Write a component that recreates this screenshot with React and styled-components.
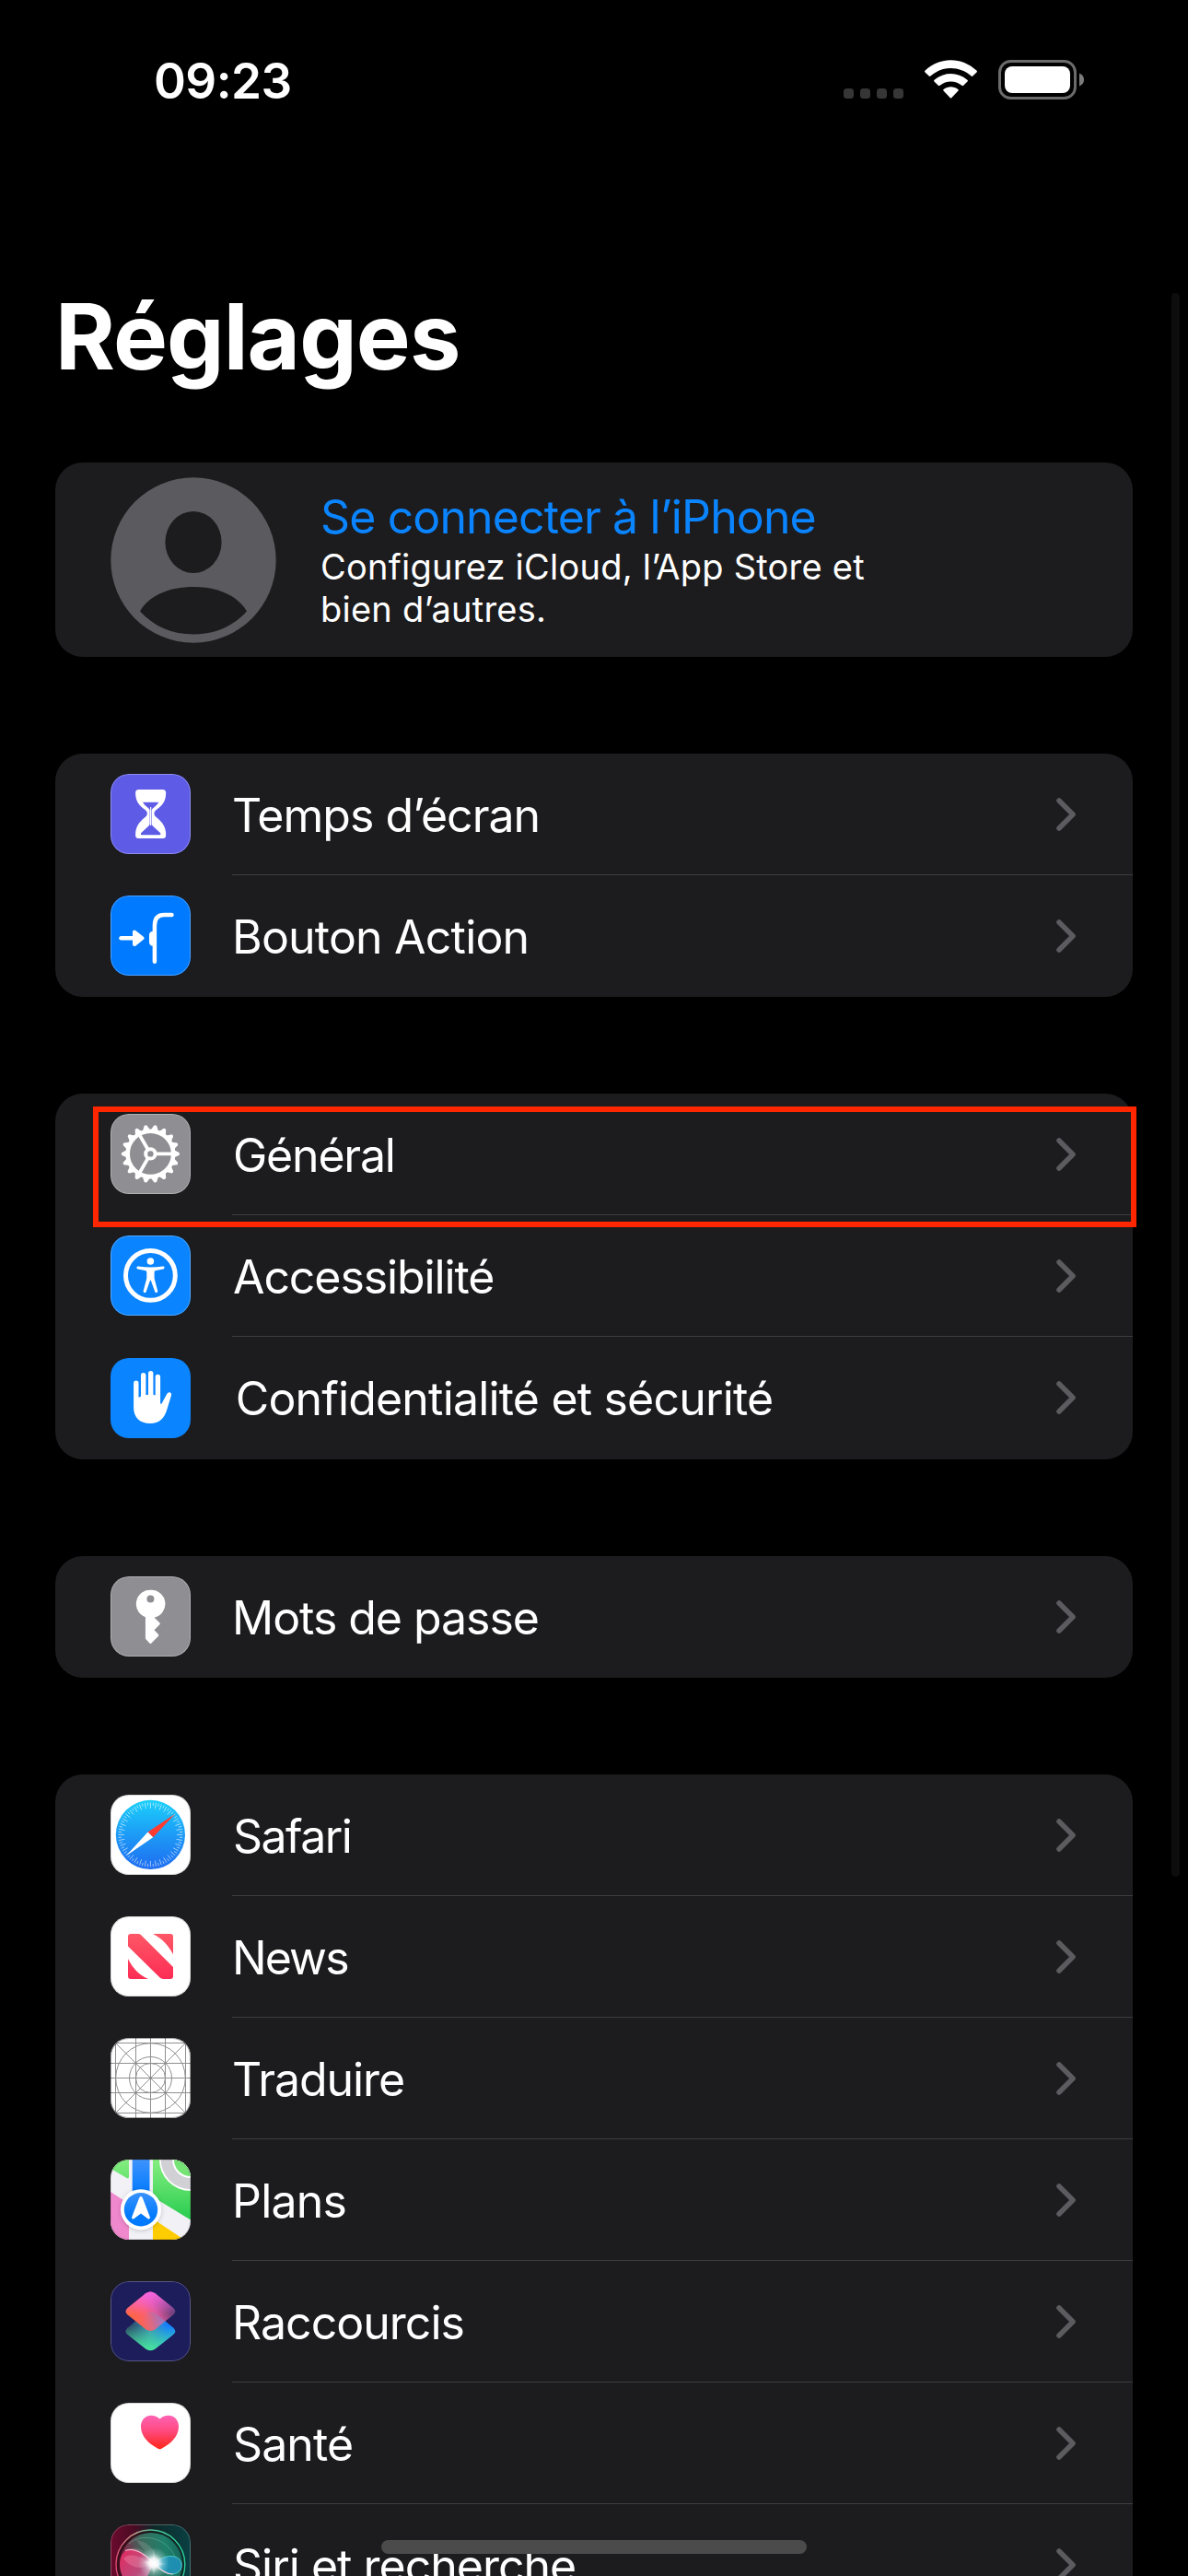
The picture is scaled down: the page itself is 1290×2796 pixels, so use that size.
import React from "react";
import styled, { createGlobalStyle } from "styled-components";

const GlobalStyle = createGlobalStyle`
  html, body {
    margin: 0;
    background: #000;
  }
  * {
    box-sizing: border-box;
  }
`;

const Screen = styled.div`
  position: relative;
  display: flex;
  flex-direction: column;
  width: 1290px;
  height: 2796px;
  overflow: hidden;
  background: #000;
  color: #fff;
  font-family: Inter, "Liberation Sans", sans-serif;
`;

const StatusBar = styled.header`
  display: flex;
  flex: none;
  align-items: center;
  justify-content: space-between;
  height: 118px;
  padding: 58px 113px 0 167px;
`;

const Clock = styled.time`
  font-size: 53px;
  font-weight: 600;
  line-height: 60px;
  letter-spacing: -0.6px;
`;

const StatusIcons = styled.div`
  display: flex;
  align-items: flex-start;
  height: 46px;
`;

const SignalDots = styled.div`
  display: flex;
  gap: 7px;
  margin: 31px 23px 0 0;
`;

const Dot = styled.i`
  width: 11px;
  height: 11px;
  border-radius: 3.5px;
  background: #363636;
`;

const WifiIcon = styled.svg`
  width: 57px;
  height: 43px;
  margin-right: 23px;
`;

const BatteryIcon = styled.svg`
  width: 93px;
  height: 43px;
`;

const Title = styled.h1`
  flex: none;
  margin: 187px 0 77px 60px;
  font-size: 99px;
  font-weight: 700;
  line-height: 120px;
  letter-spacing: -0.89px;
`;

const Groups = styled.main`
  display: flex;
  flex-direction: column;
  gap: 105px;
  padding: 0 60px;
`;

const Card = styled.section`
  flex: none;
  padding-bottom: ${(p) => p.$padBottom ?? 0}px;
  border-radius: 30px;
  background: #1c1c1e;
  overflow: hidden;
`;

const AccountCard = styled(Card)`
  display: flex;
  align-items: flex-start;
  height: 211px;
  padding-left: 60px;
`;

const Avatar = styled.svg`
  flex: none;
  width: 180px;
  height: 180px;
  margin: 15.5px 48px 0 0;
`;

const AccountText = styled.div`
  padding-top: 32px;
`;

const AccountName = styled.div`
  margin-bottom: 4px;
  color: #0a84ff;
  font-size: 50px;
  line-height: 54px;
  letter-spacing: -0.88px;
`;

const AccountHint = styled.div`
  width: 640px;
  font-size: 38px;
  line-height: 46px;
  letter-spacing: 0.24px;
`;

const Row = styled.div`
  display: flex;
  height: 132px;
  padding-left: 60px;
`;

const IconTile = styled.svg`
  flex: none;
  width: 87px;
  height: 87px;
  margin: ${(p) => p.$top}px 45px 0 0;
  border-radius: 20px;
`;

const RowBody = styled.div`
  display: flex;
  flex: 1;
  align-items: center;
  justify-content: space-between;
  padding: 0 62px 0 0;
  border-bottom: ${(p) => (p.$divided ? "1px solid #3d3d41" : "0")};
`;

const RowLabel = styled.span`
  padding: ${(p) => (p.$divided ? 3 : 2)}px 0 0 ${(p) => p.$indent}px;
  font-size: 50px;
  line-height: 60px;
  letter-spacing: ${(p) => p.$tracking}px;
  white-space: nowrap;
`;

const Chevron = styled.svg`
  flex: none;
  width: 21px;
  height: 36px;
`;

const Highlight = styled.div`
  position: absolute;
  top: 1201px;
  left: 101px;
  width: 1133px;
  height: 131px;
  border: 6px solid #ff2600;
`;

const ScrollThumb = styled.div`
  position: absolute;
  top: 318px;
  right: 9px;
  width: 9px;
  height: 1719px;
  border-radius: 5px;
  background: #0d0d0d;
`;

const HomeIndicator = styled.div`
  position: absolute;
  top: 2757px;
  left: 414px;
  width: 462px;
  height: 15px;
  border-radius: 8px;
  background: #4b4b4b;
`;

const Edge = ({ opacity = 0.3, color = "#fff" }) => (
  <rect x="0.5" y="0.5" width="86" height="86" rx="19.5" fill="none" stroke={color} strokeOpacity={opacity} />
);

const polar = (r, deg, c = 43.4) => {
  const a = (deg * Math.PI) / 180;
  return [c + r * Math.cos(a), c + r * Math.sin(a)];
};

const HourglassArt = () => (
  <>
    <rect width="87" height="87" fill="#5e5ce6" />
    <path
      fill="#fff"
      fillRule="evenodd"
      d="M30.5 17H56.8C59 17 60.2 18.3 60.2 20.4C60.2 30 56 34 50.3 38.6C48 40.5 47.5 41.4 47.5 43C47.5 44.8 48 45.7 50.3 47.6C56 52.4 60.2 57 60.2 66.4C60.2 68.7 59 70 56.8 70H30.5C28.3 70 27.1 68.7 27.1 66.4C27.1 57 31.3 52.4 37 47.6C39.3 45.7 39.8 44.8 39.8 43C39.8 41.4 39.3 40.5 37 38.6C31.3 34 27.1 30 27.1 20.4C27.1 18.3 28.3 17 30.5 17ZM35 30.8C36.2 33 38 34.6 40 36.3C41.8 37.8 42.4 38.4 42.6 39.6V54C42.6 55 42.2 55.8 41.4 56.6L33.6 63.8C32.6 64.8 32.5 66.3 34 66.3H53.3C54.8 66.3 54.7 64.8 53.7 63.8L45.9 56.6C45.1 55.8 44.7 55 44.7 54V39.6C44.9 38.4 45.5 37.8 47.3 36.3C49.3 34.6 51.1 33 52.3 30.8Z"
    />
    <path d="M43.65 36V56" stroke="#fff" strokeWidth="1.2" />
    <Edge />
  </>
);

const ActionArt = () => (
  <>
    <rect width="87" height="87" fill="#007aff" />
    <g fill="none" stroke="#fff" strokeWidth="4.5" strokeLinecap="round" strokeLinejoin="round">
      <path d="M11.5 46.3H27" />
      <path d="M47.9 71.7V32.5Q47.9 21 58.5 21H66.5" />
    </g>
    <path d="M26 39.5V53.1L34.5 46.3Z" fill="#fff" stroke="#fff" strokeWidth="4" strokeLinejoin="round" />
    <path d="M48 38.7H46Q42 39 42 43V50.4Q42 54.4 46 54.7H48Z" fill="#fff" />
    <Edge />
  </>
);

const GearArt = () => {
  const teeth = Array.from({ length: 18 }, (_, i) => i * 20);
  return (
    <>
      <rect width="87" height="87" fill="#8e8e93" />
      <g stroke="#fff" fill="#fff">
        <circle cx="43.4" cy="43.4" r="24.7" fill="none" strokeWidth="4.6" />
        <circle cx="43.4" cy="43.4" r="5.2" fill="none" strokeWidth="4" />
        {[0, 120, 240].map((a) => {
          const [x1, y1] = polar(6, a);
          const [x2, y2] = polar(24, a);
          return <path key={a} d={`M${x1} ${y1}L${x2} ${y2}`} strokeWidth="3.8" />;
        })}
        {teeth.map((a) => (
          <path key={a} transform={`rotate(${a} 43.4 43.4)`} stroke="none" d="M69 39.2L73 41.2Q75 41.7 75 43.4Q75 45.1 73 45.6L69 47.6Z" />
        ))}
      </g>
      <Edge />
    </>
  );
};

const AccessibilityArt = () => (
  <>
    <rect width="87" height="87" fill="#0a84ff" />
    <circle cx="43.4" cy="43.4" r="26.9" fill="none" stroke="#fff" strokeWidth="5" />
    <circle cx="43.4" cy="28" r="3.8" fill="#fff" />
    <path
      fill="#fff"
      d="M30.2 33.5Q43.4 35.6 56.8 33.5C58.9 33.2 59.2 36 57.3 36.4L49.4 38C48 38.4 47.6 39 47.6 40.4V46.5L51.2 60C51.7 62.3 49 63 48.2 61L43.9 49Q43.4 48 42.9 49L38.7 61C37.9 63 35.2 62.3 35.7 60L39.3 46.5V40.4C39.3 39 38.9 38.4 37.5 38L29.6 36.4C27.7 36 28.1 33.2 30.2 33.5Z"
    />
    <Edge />
  </>
);

const HandArt = () => (
  <>
    <rect width="87" height="87" fill="#0a84ff" />
    <path
      fill="#fff"
      d="M25.1 27.2a2.7 2.7 0 0 1 5.4 0V42.8L33 41.7V18.7a2.7 2.7 0 0 1 5.4 0V40.2L41 39.8V16.7a2.7 2.7 0 0 1 5.4 0V39.8L48.7 40.4V20.5a2.7 2.7 0 0 1 5.4 0V49.6C55.1 50 55.6 49.5 56.2 48.2L60.8 39.8C61.7 37.8 63.2 36.8 64.8 37.5C66.2 38.1 66.2 39.6 65.8 41.2L61.6 55C58.6 65.5 53 71 43 71C32 71 25.1 64.5 25.1 54Z"
    />
  </>
);

const KeyArt = () => (
  <>
    <rect width="87" height="87" fill="#8e8e93" />
    <path
      fill="#fff"
      fillRule="evenodd"
      d="M43.4 14.7A15.2 15.2 0 0 1 47.6 44.7L53.3 50.2Q54.2 51.2 53.4 52.2L47.5 58.3L52 63Q52.6 64 52 64.8L44.4 72.4Q43.4 73.4 42.4 72.4L38.7 68.6Q37.9 67.8 37.9 66.8V44.2A15.2 15.2 0 0 1 43.4 14.7ZM43.4 20.6A4 4 0 0 0 43.4 28.6A4 4 0 0 0 43.4 20.6Z"
    />
    <Edge />
  </>
);

const SafariArt = () => (
  <>
    <defs>
      <linearGradient id="safari" x1="0" y1="0" x2="0" y2="1">
        <stop offset="0" stopColor="#1bd0fb" />
        <stop offset="0.5" stopColor="#1d9bf6" />
        <stop offset="1" stopColor="#1e6cf1" />
      </linearGradient>
    </defs>
    <rect width="87" height="87" fill="#fff" />
    <circle cx="43.4" cy="43.4" r="37.6" fill="url(#safari)" />
    {Array.from({ length: 72 }, (_, i) => {
      const [x1, y1] = polar(i % 2 ? 31.6 : 28.6, i * 5);
      const [x2, y2] = polar(35, i * 5);
      return <path key={i} d={`M${x1} ${y1}L${x2} ${y2}`} stroke="#fff" strokeOpacity="0.85" strokeWidth="0.7" />;
    })}
    <path d="M70.2 20.8L40.5 40.6L46.2 46.3Z" fill="#ff3b30" />
    <path d="M17 66.2L40.5 40.6L46.2 46.3Z" fill="#fff" />
    <Edge opacity={0.15} color="#000" />
  </>
);

const NewsArt = () => (
  <>
    <defs>
      <linearGradient id="news" gradientUnits="userSpaceOnUse" x1="0" y1="19" x2="0" y2="68">
        <stop offset="0" stopColor="#fd5766" />
        <stop offset="1" stopColor="#fd2d55" />
      </linearGradient>
    </defs>
    <rect width="87" height="87" fill="#fff" />
    <g fill="url(#news)">
      <path d="M22 19H30Q32 19 33.4 20.4L68 55V65Q68 68 65 68H57Q55 68 53.6 66.6L19 32.4V22Q19 19 22 19Z" />
      <path d="M46 19H65Q68 19 68 22V41.3C62.5 31 56 24 46 19Z" />
      <path d="M19 46V65Q19 68 22 68H41C31 63.5 24.5 57 19 46Z" />
    </g>
    <Edge opacity={0.15} color="#000" />
  </>
);

const GridArt = () => (
  <>
    <rect width="87" height="87" fill="#fff" />
    <g fill="none" stroke="#8f8f8f" strokeWidth="1">
      {[5.5, 27.5, 43.5, 59.5, 81.5].map((v) => (
        <path key={v} d={`M${v} 0V87M0 ${v}H87`} />
      ))}
      <path d="M5 5L82 82M82 5L5 82" />
      <circle cx="43.5" cy="43.5" r="37.8" />
      <circle cx="43.5" cy="43.5" r="23" />
      <circle cx="43.5" cy="43.5" r="16" />
    </g>
    <circle cx="43.5" cy="43.5" r="1.7" fill="#8f8f8f" />
    <Edge opacity={0.35} color="#000" />
  </>
);

const MapsArt = () => (
  <>
    <defs>
      <linearGradient id="park" gradientUnits="userSpaceOnUse" x1="0" y1="0" x2="0" y2="60">
        <stop offset="0" stopColor="#86ee80" />
        <stop offset="1" stopColor="#30cf54" />
      </linearGradient>
      <linearGradient id="route" gradientUnits="userSpaceOnUse" x1="0" y1="0" x2="0" y2="34">
        <stop offset="0" stopColor="#3e93fb" />
        <stop offset="1" stopColor="#067cfd" />
      </linearGradient>
      <linearGradient id="puck" x1="0" y1="0" x2="0" y2="1">
        <stop offset="0" stopColor="#3a92fb" />
        <stop offset="0.7" stopColor="#007aff" />
      </linearGradient>
      <filter id="puckShadow" x="-30%" y="-30%" width="160%" height="160%">
        <feDropShadow dx="0" dy="1" stdDeviation="2.5" floodOpacity="0.2" />
      </filter>
    </defs>
    <rect width="87" height="87" fill="#f2f1f6" />
    <path d="M0 0H20V18.5Q20 21.4 17.6 20L0 9.8Z" fill="url(#park)" />
    <path d="M46 0H87V65.5L46 40.5Z" fill="url(#park)" />
    <rect x="23.7" width="18.8" height="40" fill="url(#route)" />
    <path d="M0 35L20 48V87H0Z" fill="#f088cd" />
    <path d="M46 64.3L80 87H46Z" fill="#ffcc02" />
    <circle cx="87" cy="0" r="34" fill="#fff" />
    <circle cx="87" cy="0" r="32.3" fill="#d1d0d5" />
    <circle cx="87" cy="0" r="20" fill="#fff" />
    <circle cx="87" cy="0" r="18" fill="#75e474" />
    <circle cx="33" cy="54.2" r="22" fill="#fff" filter="url(#puckShadow)" />
    <circle cx="33" cy="54.2" r="18.2" fill="url(#puck)" />
    <path d="M31.3 41.2Q33 38.6 34.7 41.2L42.8 62.3Q43.4 65.4 40.6 64.2L33 58.4L25.4 64.2Q22.6 65.4 23.2 62.3Z" fill="#fff" />
    <Edge opacity={0.12} color="#000" />
  </>
);

const diamond = (dy) =>
  `M38.3 ${13.2 + dy}Q43.4 ${10 + dy} 48.5 ${13.2 + dy}L68.2 ${29 + dy}Q72.4 ${32.8 + dy} 68.2 ${36.6 + dy}L48.5 ${52.2 + dy}Q43.4 ${55.6 + dy} 38.3 ${52.2 + dy}L18.6 ${36.6 + dy}Q14.4 ${32.8 + dy} 18.6 ${29 + dy}Z`;

const ShortcutsArt = () => (
  <>
    <defs>
      <linearGradient id="cutTop" gradientUnits="userSpaceOnUse" x1="26" y1="46" x2="66" y2="26">
        <stop offset="0" stopColor="#ff6545" />
        <stop offset="0.35" stopColor="#fb5f6c" />
        <stop offset="0.6" stopColor="#d9589a" />
        <stop offset="1" stopColor="#5a3a72" />
      </linearGradient>
      <linearGradient id="cutPink" gradientUnits="userSpaceOnUse" x1="0" y1="11" x2="0" y2="36">
        <stop offset="0" stopColor="#fb66e6" />
        <stop offset="1" stopColor="#fb66e6" stopOpacity="0" />
      </linearGradient>
      <linearGradient id="cutBottom" gradientUnits="userSpaceOnUse" x1="20" y1="50" x2="68" y2="56">
        <stop offset="0" stopColor="#2c4868" />
        <stop offset="0.5" stopColor="#3a95b5" />
        <stop offset="0.85" stopColor="#157fff" />
      </linearGradient>
      <linearGradient id="cutMint" gradientUnits="userSpaceOnUse" x1="0" y1="48" x2="0" y2="75">
        <stop offset="0" stopColor="#48e59b" stopOpacity="0" />
        <stop offset="1" stopColor="#48e59b" />
      </linearGradient>
      <linearGradient id="cutOverlap" gradientUnits="userSpaceOnUse" x1="34" y1="44" x2="60" y2="44">
        <stop offset="0" stopColor="#7f8fc0" stopOpacity="0" />
        <stop offset="1" stopColor="#6f9ae0" stopOpacity="0.55" />
      </linearGradient>
    </defs>
    <rect width="87" height="87" fill="#1d1d5b" />
    <path d={diamond(21.4)} fill="url(#cutBottom)" />
    <path d={diamond(21.4)} fill="url(#cutMint)" />
    <path d={diamond(0)} fill="url(#cutTop)" />
    <path d={diamond(0)} fill="url(#cutPink)" />
    <path
      d="M38.3 34.6Q43.4 31.5 48.5 34.6L59.5 43.5L48.5 52.2Q43.4 55.6 38.3 52.2L27.4 43.5Z"
      fill="url(#cutOverlap)"
    />
    <Edge opacity={0.25} />
  </>
);

const HealthArt = () => (
  <>
    <defs>
      <linearGradient id="heart" x1="0" y1="0" x2="0" y2="1">
        <stop offset="0" stopColor="#ff62b4" />
        <stop offset="0.45" stopColor="#ff4a80" />
        <stop offset="1" stopColor="#ff2616" />
      </linearGradient>
    </defs>
    <rect width="87" height="87" fill="#fff" />
    <path
      fill="url(#heart)"
      d="M53.5 17.6C51 15.1 47.8 13.8 44 13.8C37.5 13.8 33 18.8 33 25.8C33 36.5 41.5 44.5 51.6 49.7Q53.5 50.7 55.4 49.7C65.5 44.5 74 36.5 74 25.8C74 18.8 69.5 13.8 63 13.8C59.2 13.8 56 15.1 53.5 17.6Z"
    />
    <Edge opacity={0.15} color="#000" />
  </>
);

const SiriArt = () => (
  <>
    <defs>
      <linearGradient id="siriBack" x1="0" y1="0" x2="1" y2="0">
        <stop offset="0" stopColor="#6b0a2c" />
        <stop offset="0.3" stopColor="#4a0b24" />
        <stop offset="0.55" stopColor="#0d2a2a" />
        <stop offset="1" stopColor="#0a4043" />
      </linearGradient>
      <linearGradient id="siriOrb" x1="0" y1="0.2" x2="1" y2="0">
        <stop offset="0" stopColor="#8a1f46" />
        <stop offset="0.35" stopColor="#3c6a5c" />
        <stop offset="0.7" stopColor="#1f806a" />
        <stop offset="1" stopColor="#135f55" />
      </linearGradient>
      <linearGradient id="siriRing" x1="0" y1="0.5" x2="1" y2="0.3">
        <stop offset="0" stopColor="#d8456f" />
        <stop offset="0.3" stopColor="#c98e84" />
        <stop offset="0.6" stopColor="#55c39a" />
        <stop offset="1" stopColor="#25d49a" />
      </linearGradient>
      <linearGradient id="siriRed" x1="0" y1="0" x2="1" y2="1">
        <stop offset="0" stopColor="#ee2a62" />
        <stop offset="0.6" stopColor="#c44c80" />
        <stop offset="1" stopColor="#d9b9d0" />
      </linearGradient>
      <radialGradient id="siriGlow">
        <stop offset="0" stopColor="#fff" />
        <stop offset="0.3" stopColor="#fff" stopOpacity="0.9" />
        <stop offset="0.6" stopColor="#dff" stopOpacity="0.35" />
        <stop offset="1" stopColor="#bff" stopOpacity="0" />
      </radialGradient>
    </defs>
    <rect width="87" height="87" fill="url(#siriBack)" />
    <circle cx="43.4" cy="43.4" r="37.4" fill="#18100f" fillOpacity="0.5" stroke="url(#siriRing)" strokeWidth="1.4" />
    <circle cx="44" cy="43" r="34" fill="url(#siriOrb)" />
    <path d="M20 21C34 8 64 14 72 40" fill="none" stroke="#7fd8bd" strokeOpacity="0.45" strokeWidth="0.8" />
    <path d="M28 17C42 19 52 30 50 43L18 29C24 24 32 25 38 30Z" fill="#c8b9b9" fillOpacity="0.22" />
    <path d="M47 42C37 30 26 25 18 28C9 32 8 46 13 56C18 66 30 68 37 60C43 54 43 48 47 42Z" fill="url(#siriRed)" fillOpacity="0.9" />
    <path d="M14 37C24 28 34 38 47 42C36 50 22 48 14 37Z" fill="#f08cac" fillOpacity="0.4" />
    <path d="M47 42C60 32 74 32 77 42C79 53 66 57 58 51Z" fill="#1f93bd" fillOpacity="0.85" stroke="#5be0dd" strokeOpacity="0.8" strokeWidth="1" />
    <path d="M16 28.5C27 24 39 34 47 42C54 50 60 54 68 54" fill="none" stroke="#ffc7dc" strokeOpacity="0.85" strokeWidth="1.2" />
    <circle cx="47" cy="42" r="17" fill="url(#siriGlow)" />
    <path d="M47 26L48.5 40.5L60 43L49 45L47 56L45 45L34 41L45.5 39.5Z" fill="#fff" fillOpacity="0.25" />
    <Edge opacity={0.25} />
  </>
);

const groups = [
  {
    rows: [
      { label: "Temps d’écran", art: HourglassArt, tracking: -1 },
      { label: "Bouton Action", art: ActionArt, tracking: -0.8 },
    ],
  },
  {
    padBottom: 1,
    rows: [
      { label: "Général", art: GearArt, tracking: -1.2, indent: 1 },
      { label: "Accessibilité", art: AccessibilityArt, tracking: -1.1, indent: 1 },
      { label: "Confidentialité et sécurité", art: HandArt, tracking: -0.82, indent: 3.7, top: 23 },
    ],
  },
  { rows: [{ label: "Mots de passe", art: KeyArt, tracking: -1.04 }] },
  {
    rows: [
      { label: "Safari", art: SafariArt, tracking: -1.55, indent: 1 },
      { label: "News", art: NewsArt, tracking: -1.9 },
      { label: "Traduire", art: GridArt, tracking: -1.09 },
      { label: "Plans", art: MapsArt, tracking: -0.78 },
      { label: "Raccourcis", art: ShortcutsArt, tracking: -0.98 },
      { label: "Santé", art: HealthArt, tracking: -0.9, indent: 1 },
      { label: "Siri et recherche", art: SiriArt, tracking: -1, indent: 1 },
    ],
  },
];

function SettingsRow({ item, divided }) {
  const Art = item.art;
  return (
    <Row>
      <IconTile viewBox="0 0 87 87" $top={item.top ?? 22}>
        <Art />
      </IconTile>
      <RowBody $divided={divided}>
        <RowLabel $tracking={item.tracking} $indent={item.indent ?? 0} $divided={divided}>
          {item.label}
        </RowLabel>
        <Chevron viewBox="0 0 21 36">
          <path d="M3 3L18 18L3 33" fill="none" stroke="#5b5b60" strokeWidth="5.6" strokeLinecap="round" strokeLinejoin="round" />
        </Chevron>
      </RowBody>
    </Row>
  );
}

export default function App() {
  return (
    <>
      <GlobalStyle />
      <Screen>
        <StatusBar>
          <Clock>09:23</Clock>
          <StatusIcons>
            <SignalDots>
              <Dot />
              <Dot />
              <Dot />
              <Dot />
            </SignalDots>
            <WifiIcon viewBox="0 0 57 43">
              <g fill="#fff">
                <path d="M0.5 13.4Q-0.4 12.4 0.6 11.5C17 -3.6 40 -3.6 56.4 11.5Q57.4 12.4 56.5 13.4L52.3 17.6Q51.5 18.4 50.6 17.6C38 6.2 19 6.2 6.4 17.6Q5.5 18.4 4.7 17.6Z" />
                <path d="M10.5 23.5Q9.6 22.6 10.6 21.7C21 12.7 36 12.7 46.4 21.7Q47.4 22.6 46.5 23.5L42.2 27.8Q41.3 28.6 40.4 27.8C33.5 22 23.5 22 16.6 27.8Q15.7 28.6 14.8 27.8Z" />
                <path d="M20.5 33.6Q19.6 32.7 20.6 31.9C25.2 28.2 31.8 28.2 36.4 31.9Q37.4 32.7 36.5 33.6L29.4 41Q28.5 42 27.6 41Z" />
              </g>
            </WifiIcon>
            <BatteryIcon viewBox="0 0 93 43">
              <rect x="1.5" y="1.5" width="82" height="40" rx="12" fill="none" stroke="#6b6b6b" strokeWidth="3" />
              <rect x="7" y="7" width="71" height="29" rx="8" fill="#fff" />
              <path d="M88 14.5Q93 16.5 93 21.5Q93 26.5 88 28.5Z" fill="#7c7c7c" />
            </BatteryIcon>
          </StatusIcons>
        </StatusBar>
        <Title>Réglages</Title>
        <Groups>
          <AccountCard>
            <Avatar viewBox="0 0 180 180">
              <circle cx="90" cy="90" r="89.7" fill="#5b5a5f" />
              <ellipse cx="90" cy="70.5" rx="30.6" ry="33.5" fill="#1c1c1e" />
              <path d="M32 145.5C42 128 64 119 90 119C116 119 138 128 148 145.5C133 162 113 170.5 90 170.5C67 170.5 47 162 32 145.5Z" fill="#1c1c1e" />
            </Avatar>
            <AccountText>
              <AccountName>Se connecter à l’iPhone</AccountName>
              <AccountHint>
                Configurez iCloud, l’App Store et
                <br />
                bien d’autres.
              </AccountHint>
            </AccountText>
          </AccountCard>
          {groups.map(({ rows, padBottom }) => (
            <Card key={rows[0].label} $padBottom={padBottom}>
              {rows.map((item, i) => (
                <SettingsRow key={item.label} item={item} divided={i < rows.length - 1} />
              ))}
            </Card>
          ))}
        </Groups>
        <Highlight />
        <ScrollThumb />
        <HomeIndicator />
      </Screen>
    </>
  );
}
